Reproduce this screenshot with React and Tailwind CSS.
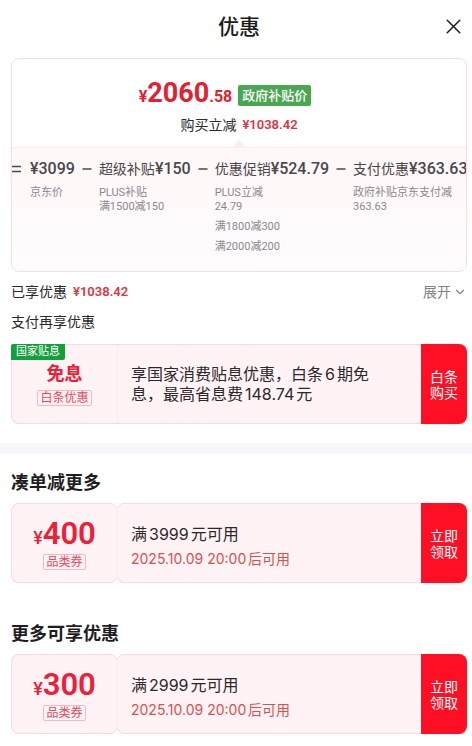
import React from 'react';
import { ChevronDown, X } from 'lucide-react';

const priceParts = [
  { sign: '=', label: '', amount: '¥3099', notes: [['京东价']] },
  { sign: '–', label: '超级补贴', amount: '¥150', notes: [['PLUS补贴', '满1500减150']] },
  {
    sign: '–',
    label: '优惠促销',
    amount: '¥524.79',
    notes: [['PLUS立减', '24.79'], ['满1800减300'], ['满2000减200']],
  },
  { sign: '–', label: '支付优惠', amount: '¥363.63', notes: [['政府补贴京东支付减', '363.63']] },
];

const Sign = ({ type }) => (
  <svg
    viewBox="0 0 10 10"
    className="h-[10px] w-[10px] shrink-0"
    fill="none"
    stroke="#4a474b"
    strokeWidth="1.6"
    role="img"
    aria-label={type}
  >
    {type === '=' ? <path d="M0 2.5h9M0 7.5h9" /> : <path d="M0.5 5h9" />}
  </svg>
);

const PricePart = ({ part }) => (
  <div className="flex shrink-0">
    <div className={part.sign === '=' ? 'flex h-6 w-[18px] items-center' : 'flex h-6 w-6 items-center justify-center'}>
      <Sign type={part.sign} />
    </div>
    <div>
      <div className="flex h-6 items-center whitespace-nowrap text-[#4a474b]">
        <span className="text-sm">{part.label}</span>
        <span className="text-base font-medium">{part.amount}</span>
      </div>
      <div className="mt-[5px] flex flex-col gap-1.5 text-[11px] leading-[14px] text-[#8b888e]">
        {part.notes.map((lines) => (
          <div key={lines[0]}>
            {lines.map((line) => (
              <p key={line} className="whitespace-nowrap">{line}</p>
            ))}
          </div>
        ))}
      </div>
    </div>
  </div>
);

// 票券上下缺口
const Notch = ({ className }) => (
  <svg viewBox="0 0 12 6" className={`absolute h-[6px] w-[12px] ${className}`} fill="#fff" stroke="#fbd9de">
    <path d="M0 0.5C3 0.5 4 4.5 6 4.5S9 0.5 12 0.5" />
    <path d="M1 0H11" stroke="#fff" />
  </svg>
);

const Coupon = ({ badge, title, amount, tag, action, notched, children }) => (
  <div className="relative flex h-20 rounded-lg bg-[#fff3f5]">
    <div className="flex min-w-0 flex-1 rounded-l-lg border border-r-0 border-[#fbd9de]">
      <div
        className={`flex w-[106px] shrink-0 flex-col items-center border-r border-[#fdeaed] ${
          badge ? 'pt-[15px]' : 'pt-3'
        }`}
      >
        {title && <div className="text-lg leading-7 font-bold text-[#ea2138]">{title}</div>}
        {amount && (
          <div className="flex items-baseline font-semibold text-[#ea2138]">
            <span className="text-lg leading-4 font-medium">¥</span>
            <span className="text-[31px] leading-9">{amount}</span>
          </div>
        )}
        <span className="mt-0.5 rounded-xs border border-[#f7b9c1] px-0.5 text-xs leading-[14px] text-[#e8485a]">
          {tag}
        </span>
      </div>
      <div className="flex min-w-0 flex-1 flex-col justify-center pr-10 pl-[13px] font-[Inter,'Noto_Sans_CJK_SC',sans-serif] [text-autospace:normal]">
        {children}
      </div>
    </div>
    <button
      type="button"
      className="flex w-[46px] shrink-0 flex-col items-center justify-center rounded-r-lg bg-[#ff0f24] pt-0.5 text-sm leading-4 text-white"
    >
      {action.map((line) => (
        <span key={line}>{line}</span>
      ))}
    </button>
    {badge && (
      <span className="absolute top-0 left-0 rounded-tl-xs rounded-br-xs bg-[#12a03c] px-[5px] text-[11px] leading-4 text-white">
        {badge}
      </span>
    )}
    {notched && (
      <>
        <Notch className="top-0 left-[100px]" />
        <Notch className="bottom-0 left-[100px] rotate-180" />
      </>
    )}
  </div>
);

const CouponText = ({ title, time }) => (
  <div className="pt-[7px]">
    <p className="text-base leading-6 text-[#2b282b]">{title}</p>
    <p className="text-sm leading-[26px] text-[#d9504f]">{time}</p>
  </div>
);

const App = () => {
  return (
    <main className="bg-white pb-3 font-[Roboto,'Noto_Sans_CJK_SC',sans-serif] text-[#2b282b]">
      <header className="relative flex h-[58px] items-center justify-center pr-[5px] pb-1 pl-[11px]">
        <h1 className="text-[21px] leading-8 font-medium text-[#1a1a1a]">优惠</h1>
        <button type="button" aria-label="关闭" className="absolute top-3.5 right-1.5">
          <X size={25} strokeWidth={1.5} color="#222" />
        </button>
      </header>

      <div className="pr-[5px] pl-[11px]">
        <section className="overflow-hidden rounded-lg border border-[#fbdce1]">
          <div className="relative flex h-[89px] flex-col items-center border-b border-[#fce9ec] pt-[18px]">
            <div className="flex items-center gap-1.5 pr-7">
              <div className="flex items-baseline font-bold text-[#e2202f]">
                <span className="text-base leading-8">¥</span>
                <span className="text-[27px] leading-8">2060</span>
                <span className="text-base leading-8">.58</span>
              </div>
              <span className="rounded-xs bg-[#4aa751] px-1 text-[13px] leading-[21px] font-medium text-white">
                政府补贴价
              </span>
            </div>
            <div className="flex items-center gap-1.5 text-sm leading-6">
              <span>购买立减</span>
              <span className="text-[13px] font-semibold text-[#e03442]">¥1038.42</span>
            </div>
            <svg viewBox="0 0 16 8" className="absolute -bottom-px h-2 w-4" fill="#fdebee">
              <path d="M0 8C4 8 6 0 8 0S12 8 16 8Z" />
            </svg>
          </div>
          <div className="flex h-[123px] bg-linear-to-b from-[#fff7f8] to-[#fffcfd] pt-[9px]">
            {priceParts.map((part) => (
              <PricePart key={part.amount} part={part} />
            ))}
          </div>
        </section>

        <div className="mt-2 flex h-6 items-center justify-between text-sm">
          <div className="flex items-center gap-1.5">
            <span>已享优惠</span>
            <span className="text-[13px] font-semibold text-[#e03442]">¥1038.42</span>
          </div>
          <button type="button" className="flex items-center gap-0.5 text-[#858287]">
            展开
            <ChevronDown size={14} strokeWidth={2} />
          </button>
        </div>
        <p className="mt-1.5 text-sm leading-6">支付再享优惠</p>

        <div className="mt-2.5">
          <Coupon badge="国家贴息" title="免息" tag="白条优惠" action={['白条', '购买']}>
            <p className="text-base leading-5">享国家消费贴息优惠，白条6期免息，最高省息费148.74元</p>
          </Coupon>
        </div>
      </div>

      <div className="mt-[19px] h-[11px] bg-[#f6f6fb]" />

      <section className="mt-[15px] pr-[5px] pl-[11px]">
        <h2 className="mb-1.5 text-lg leading-7 font-bold text-[#1f1d1f]">凑单减更多</h2>
        <Coupon amount="400" tag="品类券" action={['立即', '领取']} notched>
          <CouponText title="满3999元可用" time="2025.10.09 20:00后可用" />
        </Coupon>
      </section>

      <section className="mt-[37px] pr-[5px] pl-[11px]">
        <h2 className="mb-1.5 text-lg leading-7 font-bold text-[#1f1d1f]">更多可享优惠</h2>
        <Coupon amount="300" tag="品类券" action={['立即', '领取']} notched>
          <CouponText title="满2999元可用" time="2025.10.09 20:00后可用" />
        </Coupon>
      </section>
    </main>
  );
};

export default App;
